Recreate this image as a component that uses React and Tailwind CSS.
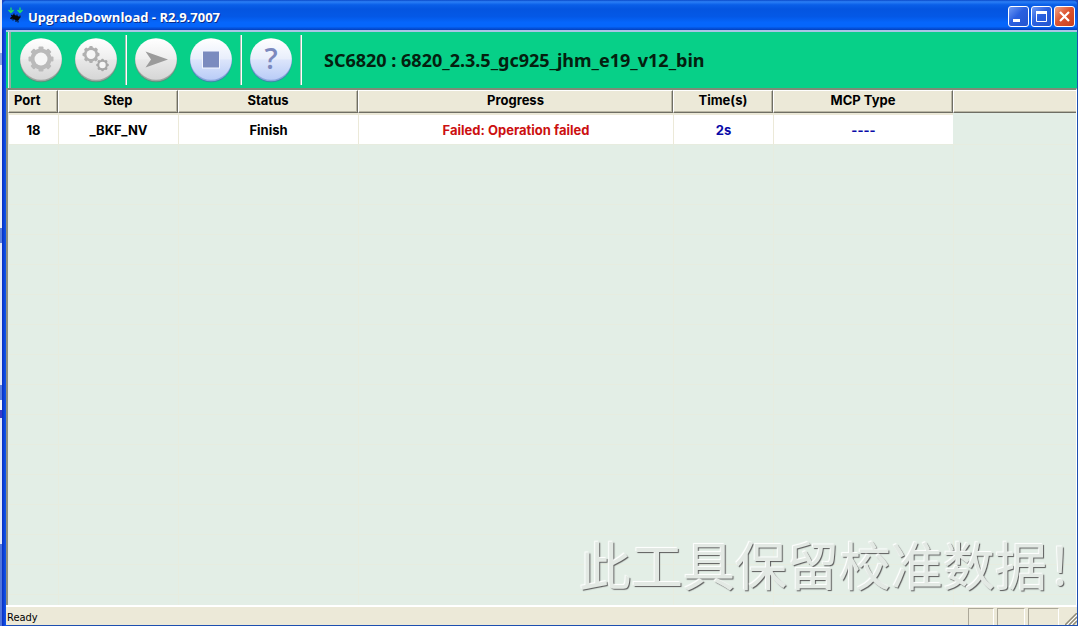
import React from "react";

const columns = [
  { label: "Port", width: "w-[50px]", align: "text-left pl-[5px]" },
  { label: "Step", width: "w-[120px]", align: "text-center" },
  { label: "Status", width: "w-[180px]", align: "text-center" },
  { label: "Progress", width: "w-[315px]", align: "text-center" },
  { label: "Time(s)", width: "w-[100px]", align: "text-center" },
  { label: "MCP Type", width: "w-[180px]", align: "text-center" },
];

const job = [
  { text: "18", color: "text-black" },
  { text: "_BKF_NV", color: "text-black" },
  { text: "Finish", color: "text-black" },
  { text: "Failed: Operation failed", color: "text-[#cc1010]" },
  { text: "2s", color: "text-[#0a0aa8]" },
  { text: "----", color: "text-[#0a0aa8]" },
];

const emptyRows = Array.from({ length: 16 }, (_, i) => i);

function ChipIcon() {
  return (
    <svg viewBox="0 0 16 16" className="h-4 w-4 shrink-0" aria-hidden="true">
      <path d="M2.500 11 5 7.500 12.500 10 10 14z" fill="#080808" />
      <path d="M3 8l1.500 1M6 6.500v2M9 7.500v2M12 8.500v2M2 11l2 1M5 12v1.500M8 13v2M10 14v1.500" stroke="#080808" strokeWidth="1" />
      <path d="M3 .5v5M.5 3 3 5.500 5.500 3M12 .5v5M9.500 3l2.500 2.500L14.500 3" fill="none" stroke="#22dd66" strokeWidth="1.300" />
    </svg>
  );
}

function Gear({ cx, cy, r, hole, tooth, color }) {
  return (
    <g>
      {[0, 45, 90, 135].map((a) => (
        <rect
          key={a}
          x={cx - tooth / 2}
          y={cy - r}
          width={tooth}
          height={r * 2}
          rx="1"
          fill={color}
          transform={`rotate(${a} ${cx} ${cy})`}
        />
      ))}
      <circle cx={cx} cy={cy} r={r * 0.84} fill={color} />
      <circle cx={cx} cy={cy} r={hole} fill="#f6f6f6" />
    </g>
  );
}

function RoundButton({ id, label, blue, children }) {
  return (
    <button type="button" aria-label={label} className="h-[46px] w-[46px] shrink-0">
      <svg viewBox="0 0 46 46" className="block h-full w-full" aria-hidden="true">
        <defs>
          <linearGradient id={id} x1="0" y1="0" x2="0" y2="1">
            <stop offset="0" stopColor="#ffffff" />
            <stop offset="0.500" stopColor={blue ? "#e8eefb" : "#eeeeee"} />
            <stop offset="0.520" stopColor={blue ? "#dce5fb" : "#e8e8e8"} />
            <stop offset="1" stopColor={blue ? "#b9ccf7" : "#d6d6d6"} />
          </linearGradient>
        </defs>
        <circle cx="23" cy="24.500" r="20.800" fill={blue ? "#4a72b4" : "#6d8078"} opacity="0.700" />
        <circle cx="23" cy="23.500" r="20.800" fill={blue ? "#8ba5dc" : "#a0a5a2"} />
        <circle cx="23" cy="22" r="20.800" fill={`url(#${id})`} />
        {children}
      </svg>
    </button>
  );
}

function Separator() {
  return <span className="mx-[6px] h-[50px] w-[2px] shrink-0 border-l border-[#a3c0b1] bg-white" />;
}

export default function App() {
  return (
    <div className="flex h-screen overflow-hidden bg-[#1747c4] font-['Inter','Liberation_Sans',sans-serif] text-black">
      <div className="flex w-[2px] shrink-0 flex-col bg-[#dfe5f8]" aria-hidden="true">
        <span className="h-[53px] bg-[#e9ecf9]" />
        <span className="h-[12px] bg-[#8ea3e0]" />
        <span className="h-[163px] bg-[#eef1fb]" />
        <span className="h-[15px] bg-[#5b7fe0]" />
        <span className="h-[142px] bg-[#e3e8fa]" />
        <span className="h-[15px] bg-[#5b7fe0]" />
        <span className="h-[10px] bg-[#f6f7fd]" />
        <span className="h-[8px] bg-[#3a3ac8]" />
        <span className="h-[126px] bg-[#e3e8fa]" />
        <span className="grow bg-[#4f74dd]" />
      </div>

      <div className="flex min-w-0 grow flex-col overflow-hidden rounded-tl-md rounded-tr-md bg-[linear-gradient(90deg,#0a2fc0,#0f57ee_4px,#1d4fb0_8px)] pr-px pb-px">
        <header className="flex h-[30px] shrink-0 items-center bg-[linear-gradient(180deg,#0a48c8_0%,#2b7ff6_6%,#0a5fe8_16%,#0455e0_30%,#0458e6_55%,#0566fb_75%,#0566fb_88%,#0340bd_100%)] pr-[2px] pl-[6px]">
          <ChipIcon />
          <h1 className="grow pt-[4px] pl-[4px] font-['Open_Sans','Noto_Sans',sans-serif] text-[13px] leading-4 font-bold text-white [text-shadow:1px_1px_0_#0b2f8c]">
            UpgradeDownload - R2.9.7007
          </h1>
          <div className="flex gap-[2px] pt-[3px]">
            <button type="button" aria-label="Minimize" className="h-[21px] w-[21px] rounded-[3px] border border-white bg-[linear-gradient(135deg,#6f9bf5,#2a60e0_45%,#2456cf)]">
              <svg viewBox="0 0 19 19" aria-hidden="true"><path d="M4 12h7v3H4z" fill="#fff" /></svg>
            </button>
            <button type="button" aria-label="Maximize" className="h-[21px] w-[21px] rounded-[3px] border border-white bg-[linear-gradient(135deg,#6f9bf5,#2a60e0_45%,#2456cf)]">
              <svg viewBox="0 0 19 19" aria-hidden="true">
                <path d="M4.500 5.500h10v9h-10z" fill="none" stroke="#fff" />
                <path d="M4 4h11v3H4z" fill="#fff" />
              </svg>
            </button>
            <button type="button" aria-label="Close" className="h-[21px] w-[21px] rounded-[3px] border border-white bg-[linear-gradient(135deg,#f0a488,#dd5430_45%,#c8401c)]">
              <svg viewBox="0 0 19 19" aria-hidden="true"><path d="M5 5l9 9M14 5l-9 9" stroke="#fff" strokeWidth="2.200" /></svg>
            </button>
          </div>
        </header>

        <div className="ml-[4px] flex min-h-0 grow flex-col bg-[#ece9d8]">
          <div className="flex h-[58px] shrink-0 items-center border-t-2 border-[#a9c4e6] bg-[#07d088] pl-[2px]">
            <span className="h-[56px] w-[3px] border-l border-[#d8f5e8] bg-[#8fae9f]" />
            <div className="flex items-center pl-[7px]">
              <RoundButton id="face-settings" label="Settings">
                <Gear cx={23} cy={22} r={12.5} hole={6.5} tooth={5} color="#bababa" />
              </RoundButton>
              <div className="w-[9px]" />
              <RoundButton id="face-options" label="Options">
                <Gear cx={18} cy={17.5} r={8.5} hole={4.5} tooth={3.5} color="#b0b0b0" />
                <Gear cx={29.5} cy={28} r={6.3} hole={3.2} tooth={2.6} color="#a8a8a8" />
              </RoundButton>
              <Separator />
              <RoundButton id="face-start" label="Start">
                <path d="M12.500 14.500 35 22.500 12.500 30.500 18 22.500z" fill="#9b9b9b" />
              </RoundButton>
              <div className="w-[9px]" />
              <RoundButton id="face-stop" label="Stop" blue>
                <rect x="14.500" y="14" width="17" height="17" fill="#7b8bbf" stroke="#f3f6ff" strokeWidth="1" />
              </RoundButton>
              <Separator />
              <RoundButton id="face-help" label="Help" blue>
                <text
                  x="23"
                  y="32"
                  textAnchor="middle"
                  className="fill-[#7c89be] font-['Open_Sans','Noto_Sans',sans-serif] text-[29px] font-semibold"
                >
                  ?
                </text>
              </RoundButton>
              <Separator />
            </div>
            <p className="truncate pl-[16px] font-['Noto_Sans','Open_Sans',sans-serif] text-[18px] leading-6 font-bold text-[#04200f]">
              SC6820 : 6820_2.3.5_gc925_jhm_e19_v12_bin
            </p>
          </div>

          <main className="relative min-h-0 grow overflow-hidden border-t-2 border-r border-l-2 border-t-[#7f8a78] border-r-white border-l-[#8b8e84] bg-[#e3eee6]">
            <table className="w-full table-fixed border-separate border-spacing-0 text-[13px] font-bold">
              <thead>
                <tr>
                  {columns.map((c) => (
                    <th
                      key={c.label}
                      scope="col"
                      className={`${c.width} ${c.align} h-[23px] border-t border-r border-b border-l border-t-white border-r-[#6f6e64] border-b-[#6f6e64] border-l-white bg-[#ece9d8] p-0 pb-[4px] leading-4 shadow-[inset_-1px_-1px_0_#b9b6a4]`}
                    >
                      {c.label}
                    </th>
                  ))}
                  <td className="h-[23px] border-t border-b border-l border-t-white border-b-[#6f6e64] border-l-white bg-[#ece9d8] p-0 shadow-[inset_0_-1px_0_#b9b6a4]" />
                </tr>
              </thead>
              <tbody>
                <tr>
                  {job.map((cell) => (
                    <td
                      key={cell.text}
                      className={`${cell.color} h-[31px] border-t-2 border-l border-[#ece9d8] bg-white p-0 text-center leading-4`}
                    >
                      {cell.text}
                    </td>
                  ))}
                  <td className="p-0" />
                </tr>
                {emptyRows.map((row) => (
                  <tr key={row}>
                    {columns.map((c) => (
                      <td key={c.label} className="h-[30px] border-t border-l border-[#e7ecdf] p-0" />
                    ))}
                    <td className="border-t border-l border-[#e7ecdf] p-0" />
                  </tr>
                ))}
              </tbody>
            </table>
            <p className="absolute right-[3px] bottom-[3px] font-['Noto_Sans_CJK_SC',sans-serif] text-[52px] leading-[76px] font-normal whitespace-nowrap text-[#e3e9e4] [font-feature-settings:'halt'] [text-shadow:-1px_-1px_1px_#ffffff,1px_1px_1px_#5a5a5a]">
              此工具保留校准数据！
            </p>
          </main>

          <footer className="flex h-[20px] shrink-0 items-center border-t-2 border-white bg-[#ece9d8]">
            <p className="grow pt-[3px] pl-px font-['DejaVu_Sans_Condensed','DejaVu_Sans',sans-serif] text-[11px] leading-4">Ready</p>
            <div className="flex gap-[3px] self-stretch pt-[1px]">
              <span className="w-[26px] border-t border-r border-l border-t-[#aca899] border-r-white border-l-[#aca899]" />
              <span className="w-[28px] border-t border-r border-l border-t-[#aca899] border-r-white border-l-[#aca899]" />
              <span className="w-[31px] border-t border-r border-l border-t-[#aca899] border-r-white border-l-[#aca899]" />
            </div>
            <svg viewBox="0 0 12 12" className="ml-[6px] h-[12px] w-[12px] self-end" aria-hidden="true">
              <path d="M0 12 12 0M4 12 12 4M8 12 12 8" stroke="#8f8b7a" strokeWidth="1.500" />
              <path d="M2 12 12 2M6 12 12 6" stroke="#fff" strokeWidth="1" />
            </svg>
          </footer>
        </div>
      </div>
    </div>
  );
}
